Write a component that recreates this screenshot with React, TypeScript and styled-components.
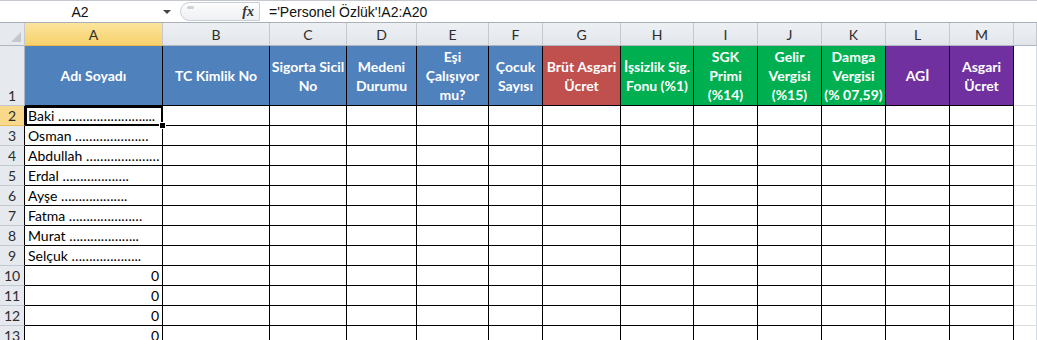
import React from "react";
import styled, { createGlobalStyle } from "styled-components";

const GlobalStyle = createGlobalStyle`
  body {
    margin: 0;
    background: #ffffff;
    font-family: Lato, "Liberation Sans", sans-serif;
  }
`;

const BLUE = "#4f81bd";
const RED = "#c0504d";
const GREEN = "#00b050";
const PURPLE = "#7030a0";

const columns = [
  { key: "A", width: 138, title: "Adı Soyadı", color: BLUE },
  { key: "B", width: 107, title: "TC Kimlik No", color: BLUE },
  { key: "C", width: 77, title: "Sigorta Sicil No", color: BLUE },
  { key: "D", width: 70, title: "Medeni Durumu", color: BLUE },
  { key: "E", width: 72, title: "Eşi Çalışıyor mu?", color: BLUE },
  { key: "F", width: 54, title: "Çocuk Sayısı", color: BLUE },
  { key: "G", width: 78, title: "Brüt Asgari Ücret", color: RED },
  { key: "H", width: 73, title: "İşsizlik Sig. Fonu (%1)", color: GREEN },
  { key: "I", width: 64, title: "SGK Primi (%14)", color: GREEN },
  { key: "J", width: 64, title: "Gelir Vergisi (%15)", color: GREEN },
  { key: "K", width: 64, title: "Damga Vergisi (%\u00a007,59)", color: GREEN },
  { key: "L", width: 64, title: "AGİ", color: PURPLE },
  { key: "M", width: 64, title: "Asgari Ücret", color: PURPLE },
];

const names = [
  "Baki ……………………....",
  "Osman …………………",
  "Abdullah …………………",
  "Erdal ……………….",
  "Ayşe ……………….",
  "Fatma …………………",
  "Murat ………………..",
  "Selçuk ………………..",
];

const rowCount = 12; // rows 2..13

const Page = styled.div`
  width: 1037px;
  height: 340px;
  overflow: hidden;
  background: #ffffff;
`;

const FormulaBar = styled.div`
  display: flex;
  align-items: center;
  height: 21px;
  border-top: 1px solid #c3c8ce;
  border-bottom: 1px solid #a9b0b8;
  background: #ffffff;
  font-family: "Liberation Sans", Arial, sans-serif;
  font-size: 14px;
  color: #111;
`;

const NameBox = styled.div`
  width: 160px;
  text-align: center;
`;

const DropArrow = styled.div`
  width: 0;
  height: 0;
  margin-left: 3px;
  border-left: 4px solid transparent;
  border-right: 4px solid transparent;
  border-top: 4px solid #444;
`;

const FxBox = styled.div`
  position: relative;
  display: flex;
  align-items: center;
  justify-content: flex-end;
  box-sizing: border-box;
  width: 80px;
  height: 19px;
  margin-left: 9px;
  padding-right: 5px;
  border: 1px solid #c9ced4;
  border-radius: 10px 0 0 10px;
  background: linear-gradient(#fdfdfd, #eef0f3);

  &::before {
    content: "";
    position: absolute;
    left: 6px;
    top: 3px;
    width: 7px;
    height: 3px;
    border-radius: 3px;
    background: #cdd2d8;
  }
`;

const FxLabel = styled.span`
  font-family: "Liberation Serif", serif;
  font-style: italic;
  font-weight: bold;
  font-size: 14px;
  color: #333;
`;

const Formula = styled.div`
  padding-left: 9px;
`;

const Sheet = styled.div`
  display: grid;
  grid-template-columns: 25px ${columns.map((c) => `${c.width}px`).join(" ")} 1fr;
  grid-template-rows: 23px 60px;
  grid-auto-rows: 20px;
`;

const Corner = styled.div`
  position: relative;
  background: #e6e9ee;
  border-right: 1px solid #c4c9d0;
  border-bottom: 1px solid #aeb6c0;
  box-sizing: border-box;

  &::after {
    content: "";
    position: absolute;
    right: 3px;
    bottom: 3px;
    width: 0;
    height: 0;
    border-left: 10px solid transparent;
    border-bottom: 10px solid #c3c8ce;
  }
`;

const ColHeader = styled.div<{ $active?: boolean }>`
  display: flex;
  align-items: center;
  justify-content: center;
  box-sizing: border-box;
  background: ${(p) =>
    p.$active
      ? "linear-gradient(#fbe49c, #f7d26c)"
      : "linear-gradient(#edf0f3, #e2e6eb)"};
  border-right: 1px solid #c4c9d0;
  border-bottom: 1px solid ${(p) => (p.$active ? "#f2b646" : "#aeb6c0")};
  font-size: 14px;
  color: #2d2d2d;
`;

const RowHeader = styled.div<{ $active?: boolean; $dark?: boolean; $tall?: boolean }>`
  display: flex;
  align-items: ${(p) => (p.$tall ? "flex-end" : "center")};
  justify-content: center;
  box-sizing: border-box;
  background: ${(p) => (p.$active ? "#f8d98c" : "#e6e9ee")};
  border-right: 1px solid ${(p) => (p.$dark ? "#000" : "#aeb6c0")};
  border-bottom: 1px solid ${(p) => (p.$active ? "#e8bc5e" : "#c4c9d0")};
  font-size: 14px;
  color: #2d2d2d;
  padding-bottom: ${(p) => (p.$tall ? "1px" : "0")};
`;

const TitleCell = styled.div<{ $bg: string }>`
  display: flex;
  align-items: center;
  justify-content: center;
  box-sizing: border-box;
  padding: 0;
  background: ${(p) => p.$bg};
  border-right: 1px solid #000;
  border-bottom: 1px solid #000;
  color: #ffffff;
  font-weight: bold;
  font-size: 14px;
  line-height: 19px;
  text-align: center;
`;

const Cell = styled.div<{ $right?: boolean }>`
  display: flex;
  align-items: center;
  justify-content: ${(p) => (p.$right ? "flex-end" : "flex-start")};
  box-sizing: border-box;
  padding: 0 3px;
  border-right: 1px solid #000;
  border-bottom: 1px solid #000;
  font-size: 14px;
  color: #000;
  white-space: nowrap;
  overflow: hidden;
`;

const ActiveCell = styled(Cell)`
  position: relative;
  overflow: visible;
  outline: 2px solid #000;
  outline-offset: -2px;

  &::after {
    content: "";
    position: absolute;
    right: -4px;
    bottom: -4px;
    width: 5px;
    height: 5px;
    background: #000;
    border: 1px solid #fff;
    z-index: 2;
  }
`;

const GridCell = styled.div`
  box-sizing: border-box;
  border-right: 1px solid #d9dde3;
  border-bottom: 1px solid #d9dde3;
`;

export default function App() {
  const rows = Array.from({ length: rowCount }, (_, i) => i + 2);

  return (
    <Page>
      <GlobalStyle />
      <FormulaBar>
        <NameBox>A2</NameBox>
        <DropArrow />
        <FxBox>
          <FxLabel>fx</FxLabel>
        </FxBox>
        <Formula>='Personel Özlük'!A2:A20</Formula>
      </FormulaBar>
      <Sheet>
        <Corner />
        {columns.map((c) => (
          <ColHeader key={c.key} $active={c.key === "A"}>
            {c.key}
          </ColHeader>
        ))}
        <ColHeader />

        <RowHeader $tall>1</RowHeader>
        {columns.map((c) => (
          <TitleCell key={c.key} $bg={c.color}>
            {c.title}
          </TitleCell>
        ))}
        <GridCell />

        {rows.map((r) => {
          const name = names[r - 2];
          return (
            <React.Fragment key={r}>
              <RowHeader $active={r === 2} $dark>
                {r}
              </RowHeader>
              {r === 2 ? (
                <ActiveCell>{name}</ActiveCell>
              ) : (
                <Cell $right={!name}>{name ?? "0"}</Cell>
              )}
              {columns.slice(1).map((c) => (
                <Cell key={c.key} />
              ))}
              <GridCell />
            </React.Fragment>
          );
        })}
      </Sheet>
    </Page>
  );
}
